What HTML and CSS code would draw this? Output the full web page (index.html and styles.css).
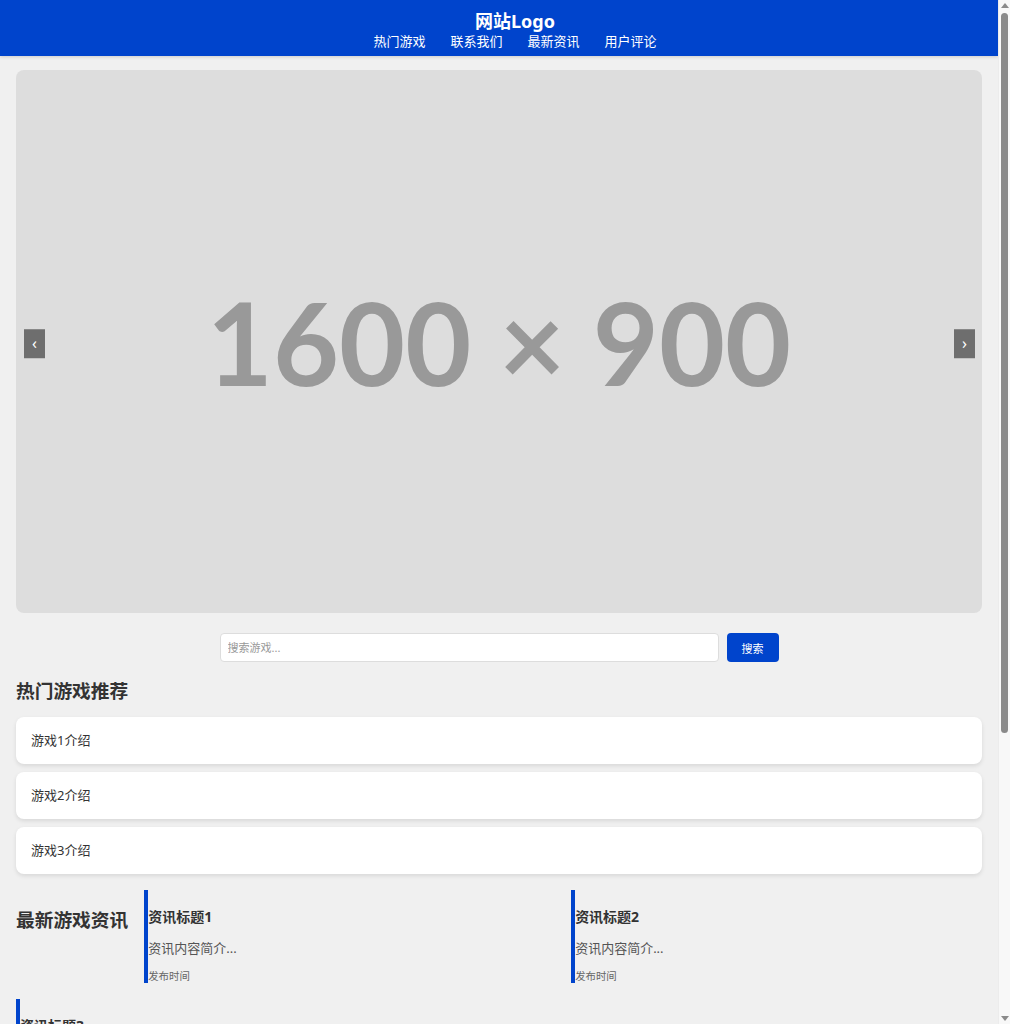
FILE: index.html
```html
<!DOCTYPE html>
<html lang="zh-CN">
<head>
<meta charset="utf-8">
<title>游戏网站</title>
<link rel="stylesheet" href="styles.css">
</head>
<body>
<header class="site-header">
  <div class="logo">网站Logo</div>
  <nav class="nav">
    <a href="#">热门游戏</a>
    <a href="#">联系我们</a>
    <a href="#">最新资讯</a>
    <a href="#">用户评论</a>
  </nav>
</header>
<main class="main">
  <section class="slider">
    <div class="slide"><span class="slide-label">1600 × 900</span></div>
    <button class="slider-btn prev" type="button">‹</button>
    <button class="slider-btn next" type="button">›</button>
  </section>

  <form class="search" onsubmit="return false">
    <input class="search-input" type="text" placeholder="搜索游戏...">
    <button class="search-btn" type="submit">搜索</button>
  </form>

  <section class="hot">
    <h2 class="section-title">热门游戏推荐</h2>
    <div class="game-list">
      <div class="game-card">游戏1介绍</div>
      <div class="game-card">游戏2介绍</div>
      <div class="game-card">游戏3介绍</div>
    </div>
  </section>

  <section class="news">
    <h2 class="section-title news-title">最新游戏资讯</h2>
    <article class="news-item">
      <h3 class="news-heading">资讯标题1</h3>
      <p class="news-summary">资讯内容简介...</p>
      <span class="news-time">发布时间</span>
    </article>
    <article class="news-item">
      <h3 class="news-heading">资讯标题2</h3>
      <p class="news-summary">资讯内容简介...</p>
      <span class="news-time">发布时间</span>
    </article>
    <article class="news-item">
      <h3 class="news-heading">资讯标题3</h3>
      <p class="news-summary">资讯内容简介...</p>
      <span class="news-time">发布时间</span>
    </article>
  </section>
</main>
<div class="fake-scrollbar" aria-hidden="true">
  <span class="sb-arrow up"></span>
  <span class="sb-thumb"></span>
  <span class="sb-arrow down"></span>
</div>
</body>
</html>
```

FILE: styles.css
```css
* {
  box-sizing: border-box;
}

html, body {
  margin: 0;
  padding: 0;
}

body {
  background: #f0f0f0;
  color: #333;
  font-family: "Noto Sans", "Noto Sans CJK SC", sans-serif;
  font-size: 13px;
  padding-right: 12px;
}

.site-header {
  background: #0044cc;
  color: #fff;
  text-align: center;
  height: 56px;
  padding: 10px 0 6px 32px;
  box-shadow: 0 1px 3px rgba(0, 0, 0, 0.15);
}

.logo {
  font-size: 18px;
  font-weight: 700;
  line-height: 22px;
}

.nav {
  display: flex;
  justify-content: center;
  gap: 25px;
  line-height: 18px;
}

.nav a {
  color: #fff;
  text-decoration: none;
  font-size: 13px;
}

.main {
  padding: 14px 16px 40px;
}

.slider {
  position: relative;
  width: 100%;
  aspect-ratio: 16 / 9;
  border-radius: 8px;
  overflow: hidden;
  background: #dddddd;
}

.slide {
  width: 100%;
  height: 100%;
  display: flex;
  align-items: center;
  justify-content: center;
}

.slide-label {
  font-family: Lato, "Noto Sans", sans-serif;
  font-weight: 700;
  font-size: 114px;
  color: #999999;
  line-height: 1;
  white-space: nowrap;
}

.slider-btn {
  position: absolute;
  top: 50%;
  transform: translateY(-44%);
  width: 21px;
  height: 29px;
  border: none;
  padding: 0;
  background: rgba(0, 0, 0, 0.5);
  color: #fff;
  font-size: 16px;
  line-height: 29px;
  cursor: pointer;
  font-family: "Noto Sans", sans-serif;
}

.slider-btn.prev {
  left: 8px;
}

.slider-btn.next {
  right: 7px;
}

.search {
  display: flex;
  justify-content: center;
  gap: 8px;
  margin-top: 20px;
}

.search-input {
  width: 499px;
  height: 29px;
  border: 1px solid #dddddd;
  border-radius: 4px;
  padding: 0 7px;
  font-size: 11px;
  font-family: "Noto Sans", "Noto Sans CJK SC", sans-serif;
  color: #333;
  background: #fff;
}

.search-input::placeholder {
  color: #999;
}

.search-btn {
  width: 52px;
  height: 29px;
  border: none;
  border-radius: 4px;
  background: #0044cc;
  color: #fff;
  font-size: 11px;
  font-family: "Noto Sans", "Noto Sans CJK SC", sans-serif;
  cursor: pointer;
}

.section-title {
  font-size: 18.72px;
  font-weight: 700;
  line-height: 26px;
  margin: 16px 0 13px;
  color: #333;
}

.game-list {
  display: flex;
  flex-direction: column;
  gap: 8px;
}

.game-card {
  background: #fff;
  border-radius: 8px;
  padding: 15px;
  height: 47px;
  line-height: 17px;
  font-size: 13px;
  color: #333;
  box-shadow: 0 2px 4px rgba(0, 0, 0, 0.1);
}

.news {
  display: flex;
  flex-wrap: wrap;
  gap: 16px;
  margin-top: 16px;
  align-items: flex-start;
}

.news-title {
  flex: none;
  margin: 17px 0 0;
}

.news-item {
  flex: 1 1 300px;
  border-left: 4px solid #0044cc;
  padding: 0;
  display: flex;
  flex-direction: column;
}

.news-heading {
  font-size: 14px;
  font-weight: 700;
  line-height: 20px;
  margin: 17px 0 0;
  color: #333;
}

.news-summary {
  font-size: 13px;
  line-height: 18px;
  margin: 12px 0 0;
  color: #555;
}

.news-time {
  display: block;
  font-size: 10.4px;
  line-height: 14px;
  margin-top: 12px;
  color: #666;
}

.fake-scrollbar {
  position: fixed;
  top: 0;
  right: 0;
  width: 12px;
  height: 100vh;
  background: #f8f8f8;
  border-left: 1px solid #ececec;
}

.sb-thumb {
  position: absolute;
  top: 13px;
  left: 2px;
  width: 7px;
  height: 720px;
  border-radius: 4px;
  background: #8a8a8a;
}

.sb-arrow {
  position: absolute;
  left: 2px;
  width: 0;
  height: 0;
  border-left: 4px solid transparent;
  border-right: 4px solid transparent;
}

.sb-arrow.up {
  top: 3px;
  border-bottom: 5px solid #8a8a8a;
}

.sb-arrow.down {
  bottom: 3px;
  border-top: 5px solid #8a8a8a;
}
```
